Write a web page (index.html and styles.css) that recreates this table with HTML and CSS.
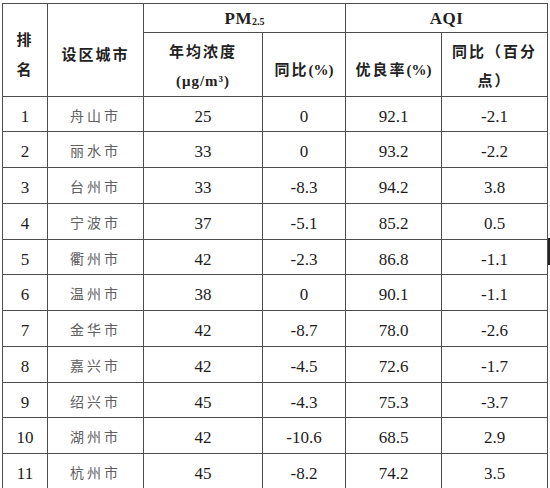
FILE: index.html
```html
<!DOCTYPE html>
<html lang="zh-CN">
<head>
<meta charset="utf-8">
<title>设区城市空气质量排名</title>
<link rel="stylesheet" href="styles.css">
</head>
<body>
<div class="page">
<table class="rank">
  <colgroup>
    <col class="c-rank"><col class="c-city"><col class="c-pm"><col class="c-pmyoy"><col class="c-aqi"><col class="c-aqiyoy">
  </colgroup>
  <thead>
    <tr class="h1">
      <th rowspan="2" class="rank-h">排<br>名</th>
      <th rowspan="2" class="city-h">设区城市</th>
      <th colspan="2" class="grp">PM<sub>2.5</sub></th>
      <th colspan="2" class="grp">AQI</th>
    </tr>
    <tr class="h2">
      <th class="two">年均浓度<br><span class="unit">(μg/m³)</span></th>
      <th class="one">同比<span class="pct">(%)</span></th>
      <th class="one">优良率<span class="pct">(%)</span></th>
      <th class="two">同比（百分<br>点）</th>
    </tr>
  </thead>
  <tbody>
    <tr><td>1</td><td class="city">舟山市</td><td>25</td><td>0</td><td>92.1</td><td>-2.1</td></tr>
    <tr><td>2</td><td class="city">丽水市</td><td>33</td><td>0</td><td>93.2</td><td>-2.2</td></tr>
    <tr><td>3</td><td class="city">台州市</td><td>33</td><td>-8.3</td><td>94.2</td><td>3.8</td></tr>
    <tr><td>4</td><td class="city">宁波市</td><td>37</td><td>-5.1</td><td>85.2</td><td>0.5</td></tr>
    <tr><td>5</td><td class="city">衢州市</td><td>42</td><td>-2.3</td><td>86.8</td><td>-1.1</td></tr>
    <tr><td>6</td><td class="city">温州市</td><td>38</td><td>0</td><td>90.1</td><td>-1.1</td></tr>
    <tr><td>7</td><td class="city">金华市</td><td>42</td><td>-8.7</td><td>78.0</td><td>-2.6</td></tr>
    <tr><td>8</td><td class="city">嘉兴市</td><td>42</td><td>-4.5</td><td>72.6</td><td>-1.7</td></tr>
    <tr><td>9</td><td class="city">绍兴市</td><td>45</td><td>-4.3</td><td>75.3</td><td>-3.7</td></tr>
    <tr><td>10</td><td class="city">湖州市</td><td>42</td><td>-10.6</td><td>68.5</td><td>2.9</td></tr>
    <tr><td>11</td><td class="city">杭州市</td><td>45</td><td>-8.2</td><td>74.2</td><td>3.5</td></tr>
  </tbody>
</table>
<span class="edge-mark"></span>
</div>
</body>
</html>
```

FILE: styles.css
```css
html, body {
  margin: 0;
  padding: 0;
  background: #ffffff;
}

.page {
  position: relative;
  width: 550px;
  height: 488px;
  overflow: hidden;
  padding: 3px 0 0 2px;
  box-sizing: border-box;
}

.rank {
  border-collapse: collapse;
  table-layout: fixed;
  width: 546px;
  font-family: "Liberation Serif", "Noto Sans CJK SC", serif;
  color: #1c1c1c;
}

.c-rank { width: 45px; }
.c-city { width: 96px; }
.c-pm { width: 119px; }
.c-pmyoy { width: 83px; }
.c-aqi { width: 96px; }
.c-aqiyoy { width: 106px; }

.rank th,
.rank td {
  border: 1px solid #4e4e4e;
  padding: 0;
  text-align: center;
  vertical-align: middle;
}

.rank th {
  font-weight: bold;
  font-size: 15px;
  letter-spacing: 2px;
  line-height: 30px;
  color: #222;
}

.rank .h1 { height: 29px; }
.rank .h2 { height: 63px; }

.rank-h,
.city-h {
  padding-top: 10px !important;
}

.city-h {
  letter-spacing: 3px;
}

.rank th.grp {
  font-size: 17px;
  letter-spacing: 0.5px;
  line-height: 20px;
  height: 28px;
  padding-top: 1px;
  box-sizing: border-box;
}

.grp sub {
  font-size: 10px;
  line-height: 0;
  vertical-align: -1px;
  letter-spacing: 0;
}

.rank th.two {
  padding-top: 5px;
  padding-bottom: 0;
  line-height: 29px;
}

.rank th.one {
  padding-top: 10px;
}

.pct {
  letter-spacing: 0;
}

.unit {
  letter-spacing: 1px;
}

.rank tbody tr { height: 36px; }
.rank tbody tr:nth-child(4n+1) { height: 35px; }

.rank td {
  font-size: 17px;
  line-height: 20px;
  padding-top: 5px;
}

.rank td.city {
  font-family: "Noto Sans CJK SC", sans-serif;
  font-size: 14px;
  letter-spacing: 3px;
  color: #606060;
  padding-top: 1px;
  padding-bottom: 0;
}

.edge-mark {
  position: absolute;
  left: 548px;
  top: 238px;
  width: 2px;
  height: 27px;
  background: #222;
}
```
